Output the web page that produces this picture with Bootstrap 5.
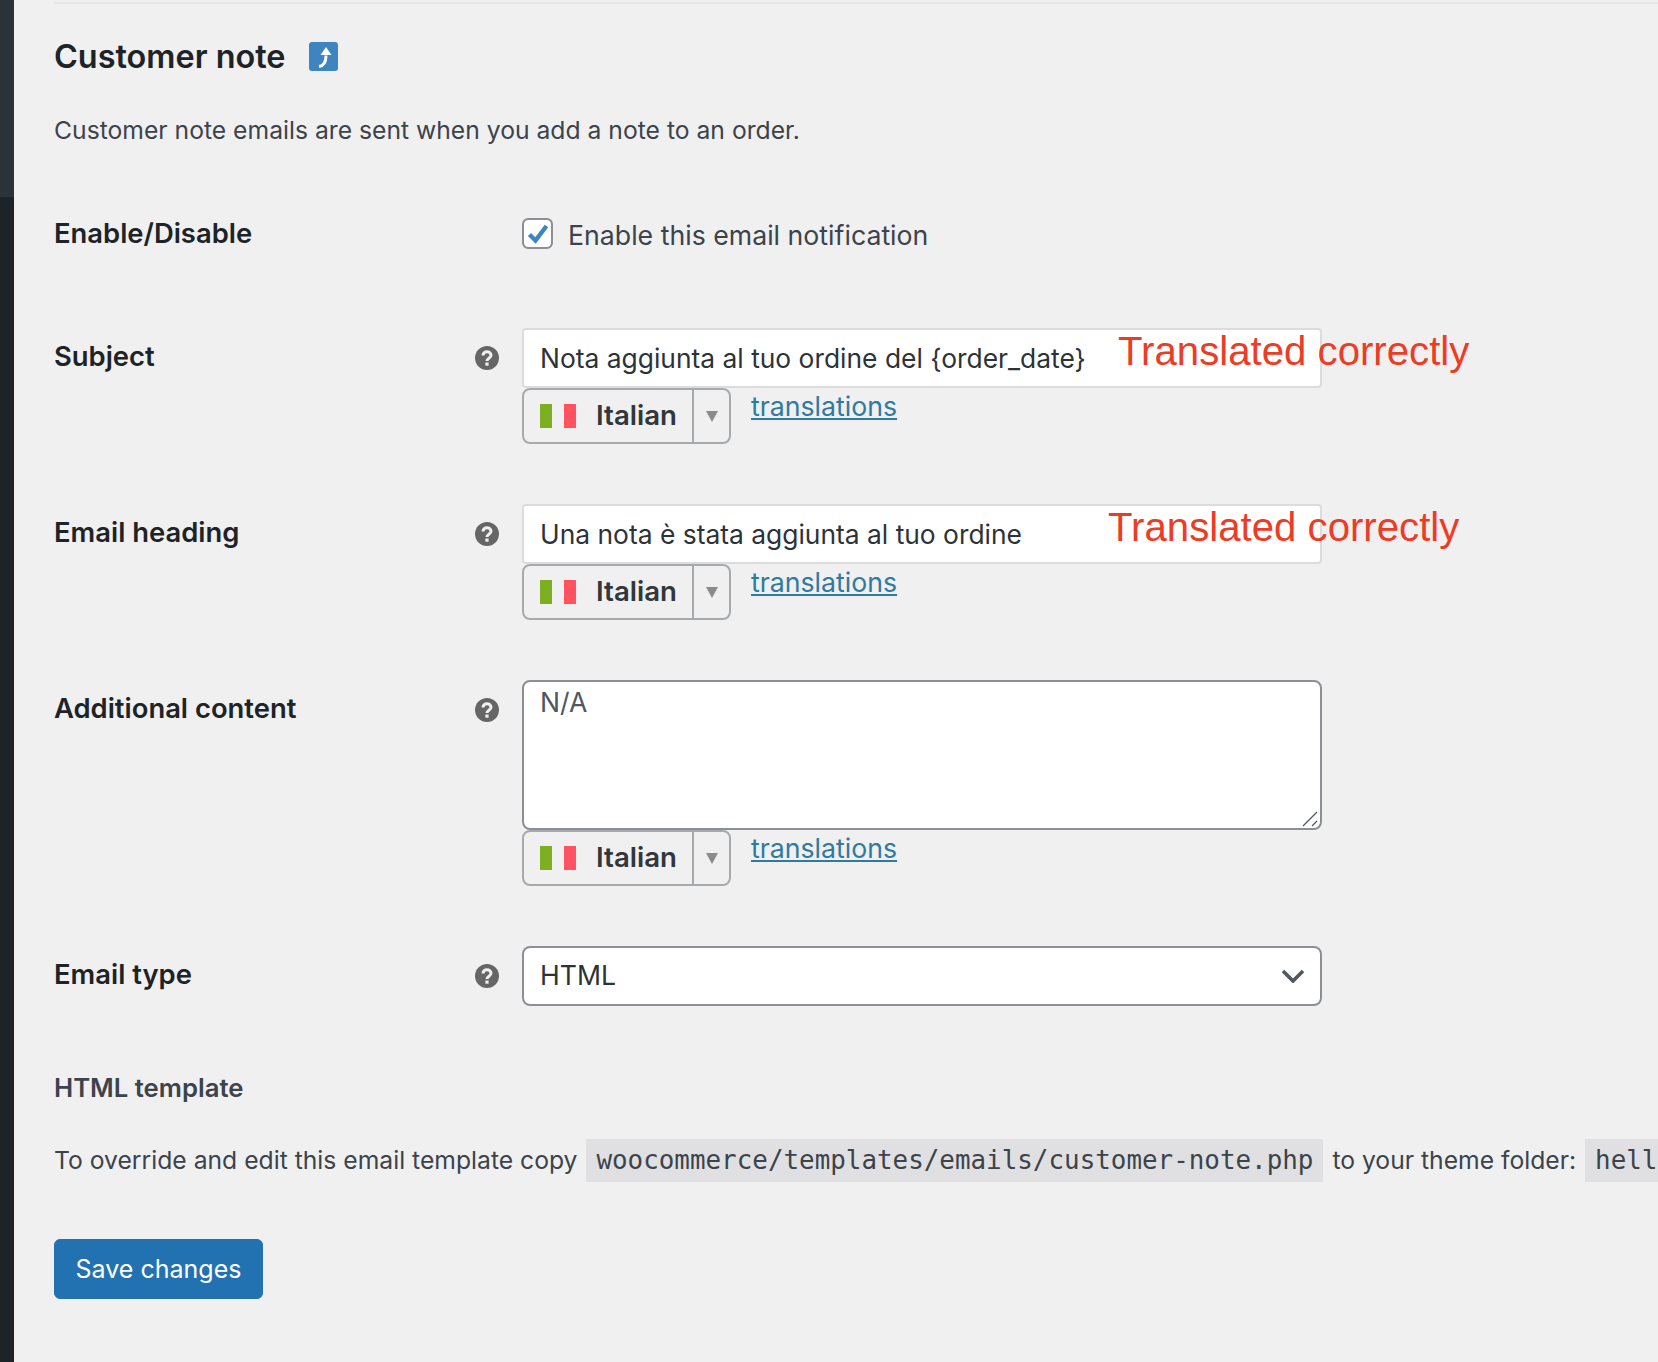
<!DOCTYPE html>
<html lang="en">
<head>
    <meta charset="UTF-8" />
    <title>Customer note</title>
    <link href="https://cdn.jsdelivr.net/npm/bootstrap@5.3.0/dist/css/bootstrap.min.css" rel="stylesheet" />
    <style>
        html, body { height: 100%; }
        body {
            background: #f0f0f1;
            color: #3c434a;
            font-family: Inter, "Liberation Sans", sans-serif;
            font-size: 24.7px;
            overflow: hidden;
        }
        .admin-side { width: 14px; flex: none; background: #1d2327; }
        .admin-side-top { height: 197px; background: #2c3338; }
        .main-wrap { padding-left: 40px; min-width: 0; flex: 1; padding-top: 2px; }
        .top-rule { height: 2px; background: #e6e6e7; }
        .page-title { font-size: 32.4px; font-weight: 600; color: #1d2327; margin: 31px 0 0; line-height: 44px; }
        .up-link { width: 29px; height: 29px; margin: -2px 0 0 24px; background: #3e84c1; border-radius: 3px; }
        .page-desc { margin: 33px 0 0; line-height: 36px; }
        .settings { margin-top: 70px; row-gap: 60px; }
        .field-label { width: 414px; flex: none; font-weight: 600; color: #1d2327; line-height: 32px; font-size: 27.4px; }
        .label-pad { padding-top: 12px; }
        .enable-label { margin-top: -1px; }
        .help-slot { width: 54px; flex: none; padding-left: 7px; }
        .help-pad { padding-top: 18px; }
        .help-slot svg { display: block; }
        .field-col { width: 800px; flex: none; position: relative; }
        .enable-row { margin-bottom: 16px; }
        .check-box {
            width: 31px; height: 31px; margin: 0 0 3px; flex: none;
            border: 2px solid #8c8f94; border-radius: 7px; background-color: #fff;
            background-size: 24px;
        }
        .check-box:checked {
            background-color: #fff; border-color: #8c8f94;
            background-image: url("data:image/svg+xml,%3csvg xmlns='http://www.w3.org/2000/svg' viewBox='0 0 24 24'%3e%3cpath fill='none' stroke='%233e84c1' stroke-width='4.4' d='M3.5 12.5l6 6L20.5 4'/%3e%3c/svg%3e");
        }
        .check-text { font-size: 26.7px; line-height: 31px; margin-left: 15px; }
        .wide-input {
            height: 60px; border: 2px solid #dcdcde; border-radius: 4px; padding: 0 16px;
            font-size: 26.4px; color: #2c3338; background: #fff;
        }
        .wide-area {
            height: 150px; border: 2px solid #8c8f94; border-radius: 8px; padding: 1px 16px;
            font-size: 26.6px; color: #50575e; background: #fff; resize: none;
        }
        .drag-grip { position: absolute; right: 4px; top: 131px; pointer-events: none; }
        .wide-select {
            height: 60px; border: 2px solid #8c8f94; border-radius: 8px; padding: 0 16px;
            font-size: 26.6px; color: #2c3338;
            background-color: #fff;
            background-size: 24px 14px;
            background-position: right 15px center;
            background-image: url("data:image/svg+xml,%3csvg xmlns='http://www.w3.org/2000/svg' viewBox='0 0 24 14'%3e%3cpath fill='none' stroke='%2350575e' stroke-width='3.6' d='M2 2l10 10L22 2'/%3e%3c/svg%3e");
        }
        .lang-pick { height: 56px; border: 2px solid #a7aaad; border-radius: 8px; width: 209px; }
        .lang-main { width: 170px; padding-left: 16px; border-right: 2px solid #a7aaad; gap: 20px; }
        .flag-it { width: 36px; height: 24px; flex: none; background: linear-gradient(90deg, #7cb021 33.3%, transparent 33.3% 66.6%, #ff5361 66.6%); }
        .lang-name { font-weight: 600; font-size: 27.6px; color: #32373c; }
        .lang-caret { width: 0; height: 0; border-left: 6px solid transparent; border-right: 6px solid transparent; border-top: 11px solid #8c8c8c; }
        .trans-link { margin-left: 20px; margin-top: 1px; font-size: 26.7px; line-height: 34px; color: #2f7aa3; text-decoration: underline; }
        .red-note {
            position: absolute; top: -1px;
            font-family: "Liberation Sans", Arial, sans-serif; font-size: 40.2px; line-height: 50px;
            color: #ee3b24; white-space: nowrap;
        }
        .red-note-a { left: 596px; }
        .red-note-b { left: 586px; }
        .tpl-title { font-size: 25.7px; font-weight: 600; color: #3c434a; margin: 66px 0 0; line-height: 32px; }
        .tpl-line { margin: 35px 0 0; line-height: 43px; white-space: nowrap; }
        .tpl-line code {
            font-family: "DejaVu Sans Mono", "Liberation Mono", monospace; font-size: 25.9px; color: #3c434a;
            background: #e0e0e2; padding: 0 10px; display: inline-block; height: 43px; margin: 0 2px;
        }
        .save-btn {
            width: 209px; height: 60px; margin-top: 57px; padding: 2px 0 0; font-size: 25px; color: #fff;
            background: #2271b1; border: 1px solid #2271b1; border-radius: 6px;
        }
    </style>
</head>
<body>
    <div class="d-flex h-100">
        <div class="admin-side"><div class="admin-side-top"></div></div>
        <div class="main-wrap">
            <div class="top-rule"></div>
            <div class="d-flex align-items-center page-title">
                Customer note
                <a class="up-link d-inline-flex" href="#" aria-label="Back">
                    <svg width="29" height="29" viewBox="0 0 29 29"><path fill="none" stroke="#fff" stroke-width="3" d="M10 24.500c4.500-.5 7-4 7-11"/><path fill="#fff" d="M17 5l5.500 8h-11z"/></svg>
                </a>
            </div>
            <p class="page-desc">Customer note emails are sent when you add a note to an order.</p>

            <form class="settings d-flex flex-column" onsubmit="return false">
                <div class="d-flex enable-row">
                    <div class="field-label enable-label">Enable/Disable</div>
                    <div class="help-slot"></div>
                    <div class="field-col d-flex align-items-center">
                        <input class="form-check-input check-box" type="checkbox" id="enabled" checked />
                        <label class="check-text" for="enabled">Enable this email notification</label>
                    </div>
                </div>

                <div class="d-flex">
                    <div class="field-label label-pad">Subject</div>
                    <div class="help-slot help-pad"><svg width="24" height="24" viewBox="0 0 24 24"><circle cx="12" cy="12" r="12" fill="#666"/><path fill="none" stroke="#f0f0f1" stroke-width="3" d="M8 9.500c0-2.500 2-3.800 4-3.800s4 1.300 4 3.500c0 3-4 3-4 5.800"/><rect x="10.400" y="16.500" width="3.200" height="3.200" fill="#f0f0f1"/></svg></div>
                    <div class="field-col">
                        <input class="form-control wide-input" type="text" value="Nota aggiunta al tuo ordine del {order_date}" />
                        <span class="red-note red-note-a">Translated correctly</span>
                        <div class="d-flex align-items-start">
                            <div class="d-flex lang-pick">
                                <div class="d-flex align-items-center lang-main"><span class="flag-it"></span><span class="lang-name">Italian</span></div>
                                <div class="d-flex flex-fill align-items-center justify-content-center"><span class="lang-caret"></span></div>
                            </div>
                            <a class="trans-link" href="#">translations</a>
                        </div>
                    </div>
                </div>

                <div class="d-flex">
                    <div class="field-label label-pad">Email heading</div>
                    <div class="help-slot help-pad"><svg width="24" height="24" viewBox="0 0 24 24"><circle cx="12" cy="12" r="12" fill="#666"/><path fill="none" stroke="#f0f0f1" stroke-width="3" d="M8 9.500c0-2.500 2-3.800 4-3.800s4 1.300 4 3.500c0 3-4 3-4 5.800"/><rect x="10.400" y="16.500" width="3.200" height="3.200" fill="#f0f0f1"/></svg></div>
                    <div class="field-col">
                        <input class="form-control wide-input" type="text" value="Una nota è stata aggiunta al tuo ordine" />
                        <span class="red-note red-note-b">Translated correctly</span>
                        <div class="d-flex align-items-start">
                            <div class="d-flex lang-pick">
                                <div class="d-flex align-items-center lang-main"><span class="flag-it"></span><span class="lang-name">Italian</span></div>
                                <div class="d-flex flex-fill align-items-center justify-content-center"><span class="lang-caret"></span></div>
                            </div>
                            <a class="trans-link" href="#">translations</a>
                        </div>
                    </div>
                </div>

                <div class="d-flex">
                    <div class="field-label label-pad">Additional content</div>
                    <div class="help-slot help-pad"><svg width="24" height="24" viewBox="0 0 24 24"><circle cx="12" cy="12" r="12" fill="#666"/><path fill="none" stroke="#f0f0f1" stroke-width="3" d="M8 9.500c0-2.500 2-3.800 4-3.800s4 1.300 4 3.500c0 3-4 3-4 5.800"/><rect x="10.400" y="16.500" width="3.200" height="3.200" fill="#f0f0f1"/></svg></div>
                    <div class="field-col">
                        <textarea class="form-control wide-area d-block">N/A</textarea>
                        <svg class="drag-grip" width="16" height="16" viewBox="0 0 16 16"><path fill="none" stroke="#50575e" stroke-width="1.300" d="M1 15L15 1M10 15l5-5"/></svg>
                        <div class="d-flex align-items-start">
                            <div class="d-flex lang-pick">
                                <div class="d-flex align-items-center lang-main"><span class="flag-it"></span><span class="lang-name">Italian</span></div>
                                <div class="d-flex flex-fill align-items-center justify-content-center"><span class="lang-caret"></span></div>
                            </div>
                            <a class="trans-link" href="#">translations</a>
                        </div>
                    </div>
                </div>

                <div class="d-flex">
                    <div class="field-label label-pad">Email type</div>
                    <div class="help-slot help-pad"><svg width="24" height="24" viewBox="0 0 24 24"><circle cx="12" cy="12" r="12" fill="#666"/><path fill="none" stroke="#f0f0f1" stroke-width="3" d="M8 9.500c0-2.500 2-3.800 4-3.800s4 1.300 4 3.500c0 3-4 3-4 5.800"/><rect x="10.400" y="16.500" width="3.200" height="3.200" fill="#f0f0f1"/></svg></div>
                    <div class="field-col">
                        <select class="form-select wide-select"><option>HTML</option></select>
                    </div>
                </div>
            </form>

            <div class="tpl-title">HTML template</div>
            <p class="tpl-line">To override and edit this email template copy <code>woocommerce/templates/emails/customer-note.php</code> to your theme folder: <code>hell</code></p>
            <button class="btn save-btn" type="button">Save changes</button>
        </div>
    </div>
    <script src="https://cdn.jsdelivr.net/npm/bootstrap@5.3.0/dist/js/bootstrap.bundle.min.js"></script>
</body>
</html>
